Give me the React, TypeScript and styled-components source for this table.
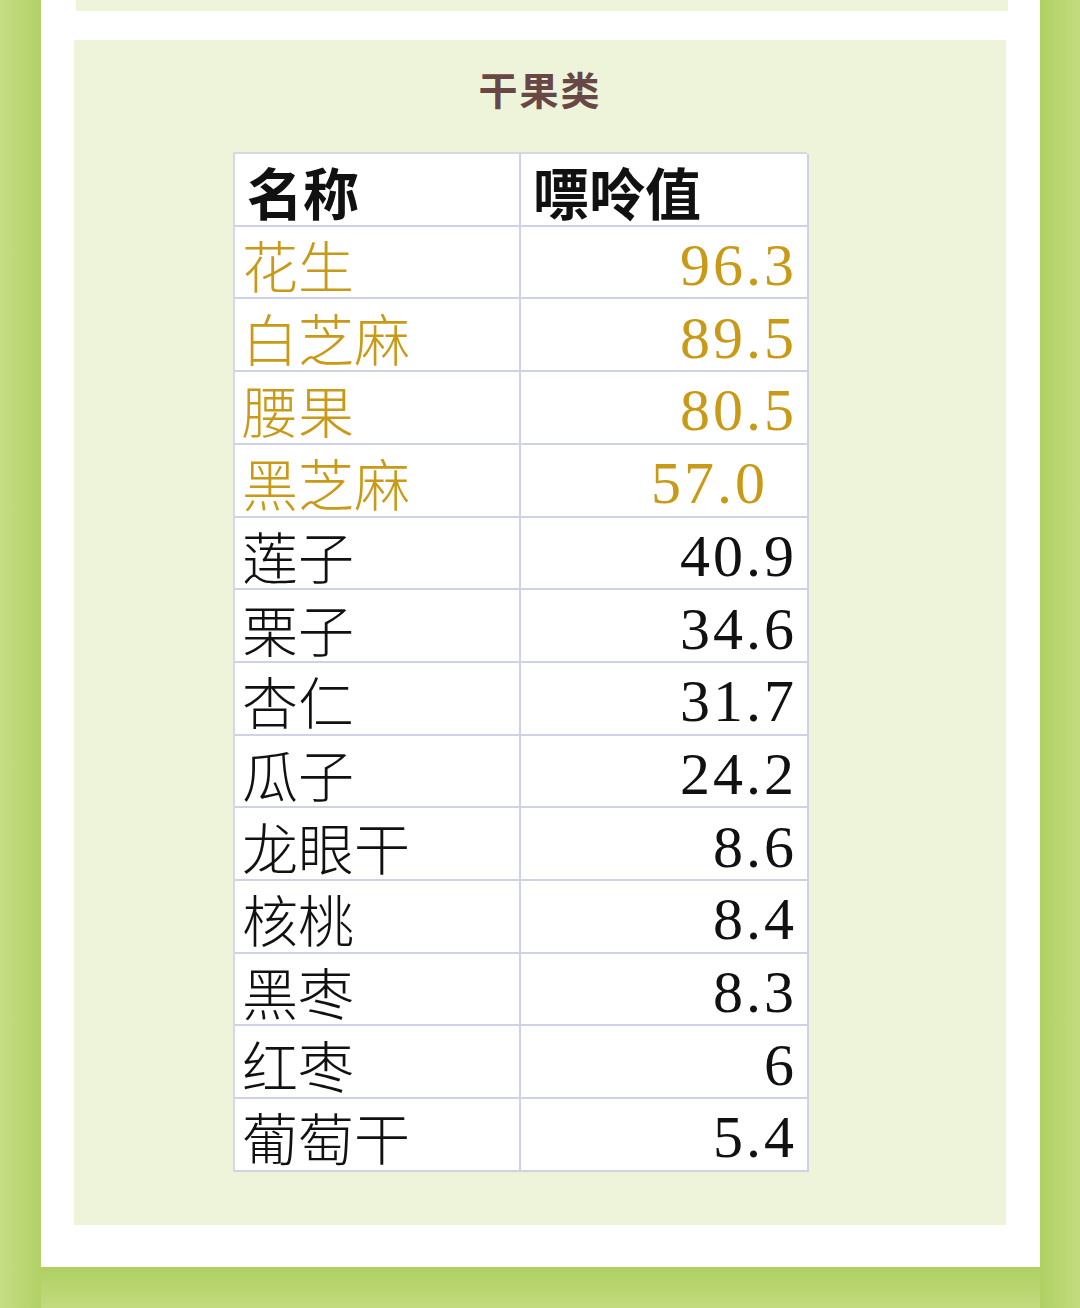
import React from "react";
import styled, { createGlobalStyle } from "styled-components";

const GlobalStyle = createGlobalStyle`
  html, body { margin: 0; padding: 0; }
  body {
    width: 1080px;
    height: 1308px;
    overflow: hidden;
    background: #bcd973;
    font-family: "Noto Sans CJK SC", "Noto Sans", sans-serif;
  }
`;

const Page = styled.div`
  width: 1080px;
  height: 1308px;
  box-sizing: border-box;
  padding: 0 40px 41px 41px;
  background:
    linear-gradient(90deg, #c5dd84 0px, #b2d166 41px, rgba(0,0,0,0) 41px, rgba(0,0,0,0) 1040px, #b0d063 1040px, #c3dc80 1080px),
    linear-gradient(180deg, #bcd973 0px, #bcd973 1267px, #afcf62 1267px, #c2db7e 1308px);
`;

const Panel = styled.div`
  height: 1267px;
  background: #ffffff;
  display: flex;
  flex-direction: column;
`;

const TopBox = styled.div`
  height: 11px;
  margin: 0 32px 29px 35px;
  background: #eef4da;
`;

const Card = styled.section`
  height: 1185px;
  margin: 0 34px 0 33px;
  background: #eef4da;
  box-sizing: border-box;
  padding-top: 27px;
  display: flex;
  flex-direction: column;
`;

const Title = styled.h2`
  margin: 0 0 43px;
  height: 42px;
  line-height: 42px;
  text-align: center;
  font-size: 39px;
  font-weight: 700;
  color: #6a4747;
  letter-spacing: 2px;
`;

const Table = styled.div`
  margin-left: 159px;
  width: 574px;
  display: grid;
  grid-template-columns: 286px 288px;
  grid-auto-rows: 72.71px;
  background: #ffffff;
  border-top: 2px solid #d3d7e8;
  border-left: 2px solid #d3d7e8;
  box-sizing: border-box;
`;

const Cell = styled.div<{ $align?: "left" | "right"; $tone?: "head" | "gold" | "plain"; $shift?: number }>`
  border-right: 2px solid #cdd2e4;
  border-bottom: 2px solid #cdd2e4;
  display: flex;
  align-items: center;
  justify-content: ${(p) => (p.$align === "right" ? "flex-end" : "flex-start")};
  padding: ${(p) => (p.$align === "right" ? `0 ${10 + (p.$shift ?? 0)}px 0 0` : "0 0 0 7px")};
  white-space: nowrap;
  color: ${(p) => (p.$tone === "gold" ? "#c99a17" : "#111111")};
  font-weight: ${(p) => (p.$tone === "head" ? 700 : 400)};
`;

const NameText = styled.span<{ $head?: boolean }>`
  font-family: "Noto Sans CJK SC", sans-serif;
  font-size: 56px;
  line-height: 1;
  font-weight: ${(p) => (p.$head ? 700 : 300)};
  padding-left: ${(p) => (p.$head ? "5px" : "0")};
  padding-top: 4px;
`;

const NumText = styled.span`
  font-family: "Liberation Serif", "DejaVu Serif", serif;
  font-size: 60px;
  line-height: 1;
  letter-spacing: 3px;
  padding-top: 6px;
`;

type Row = { name: string; value: string; gold?: boolean; shift?: number };

const rows: Row[] = [
  { name: "花生", value: "96.3", gold: true },
  { name: "白芝麻", value: "89.5", gold: true },
  { name: "腰果", value: "80.5", gold: true },
  { name: "黑芝麻", value: "57.0", gold: true, shift: 29 },
  { name: "莲子", value: "40.9" },
  { name: "栗子", value: "34.6" },
  { name: "杏仁", value: "31.7" },
  { name: "瓜子", value: "24.2" },
  { name: "龙眼干", value: "8.6" },
  { name: "核桃", value: "8.4" },
  { name: "黑枣", value: "8.3" },
  { name: "红枣", value: "6" },
  { name: "葡萄干", value: "5.4" },
];

export default function App() {
  return (
    <>
      <GlobalStyle />
      <Page>
        <Panel>
          <TopBox />
          <Card>
            <Title>干果类</Title>
            <Table>
              <Cell $tone="head">
                <NameText $head>名称</NameText>
              </Cell>
              <Cell $tone="head">
                <NameText $head>嘌呤值</NameText>
              </Cell>
              {rows.map((r) => (
                <React.Fragment key={r.name}>
                  <Cell $tone={r.gold ? "gold" : "plain"}>
                    <NameText>{r.name}</NameText>
                  </Cell>
                  <Cell $tone={r.gold ? "gold" : "plain"} $align="right" $shift={r.shift}>
                    <NumText>{r.value}</NumText>
                  </Cell>
                </React.Fragment>
              ))}
            </Table>
          </Card>
        </Panel>
      </Page>
    </>
  );
}
